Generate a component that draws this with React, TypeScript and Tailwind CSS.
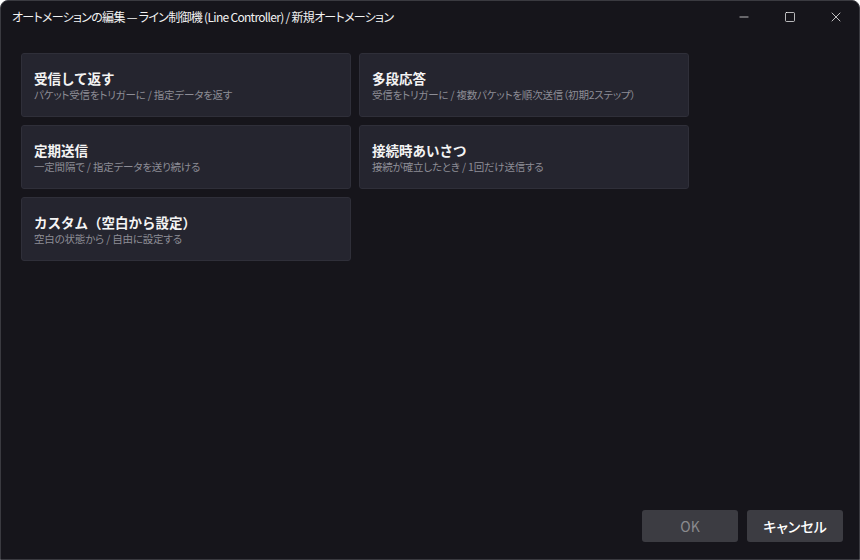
import { Minus, Square, X } from "lucide-react";

type Template = { title: string; desc: string };

const templates: Template[] = [
  { title: "受信して返す", desc: "パケット受信をトリガーに / 指定データを返す" },
  { title: "多段応答", desc: "受信をトリガーに / 複数パケットを順次送信（初期2ステップ）" },
  { title: "定期送信", desc: "一定間隔で / 指定データを送り続ける" },
  { title: "接続時あいさつ", desc: "接続が確立したとき / 1回だけ送信する" },
  { title: "カスタム（空白から設定）", desc: "空白の状態から / 自由に設定する" },
];

const font = {
  fontFamily: '"Noto Sans CJK JP", "Noto Sans", sans-serif',
};

export default function App() {
  return (
    <div
      style={font}
      className="flex h-[560px] w-[860px] flex-col overflow-hidden rounded-t-lg border border-[#3a3a40] bg-[#16151b] text-white"
    >
      {/* title bar */}
      <div className="flex h-[32px] shrink-0 items-center">
        <div className="flex-1 pl-[11px] text-[12px] leading-none tracking-[-0.7px] text-[#f2f2f2] [font-feature-settings:'palt']">
          オートメーションの編集 — ライン制御機 (Line Controller) / 新規オートメーション
        </div>
        <div className="flex h-full">
          <button className="flex w-[46px] items-center justify-center text-white">
            <Minus size={14} strokeWidth={1.2} />
          </button>
          <button className="flex w-[46px] items-center justify-center text-white">
            <Square size={12} strokeWidth={1.4} />
          </button>
          <button className="flex w-[46px] items-center justify-center text-white">
            <X size={16} strokeWidth={1.1} />
          </button>
        </div>
      </div>

      {/* template cards */}
      <div className="flex-1 px-[20px] pt-[20px]">
        <div className="grid w-[668px] grid-cols-2 gap-[8px_8px]">
          {templates.map((t) => (
            <button
              key={t.title}
              className="flex h-[64px] flex-col items-start justify-center rounded-[3px] border border-[#2f2f39] bg-[#25252f] pl-[12px] text-left"
            >
              <span className="text-[13.5px] font-bold leading-[18px] text-[#f4f4f4]">
                {t.title}
              </span>
              <span className="mt-[1px] text-[10.5px] leading-[14px] tracking-[-0.2px] text-[#8d8d96] [font-feature-settings:'palt']">
                {t.desc}
              </span>
            </button>
          ))}
        </div>
      </div>

      {/* footer */}
      <div className="flex justify-end gap-[9px] pb-[17px] pr-[16px]">
        <button className="h-[32px] w-[96px] rounded-[3px] bg-[#3c3c42] text-[14px] text-[#8a8a8e]">
          OK
        </button>
        <button className="h-[32px] w-[96px] rounded-[3px] bg-[#3c3c42] text-[14px] font-medium text-white [font-feature-settings:'palt']">
          キャンセル
        </button>
      </div>
    </div>
  );
}
